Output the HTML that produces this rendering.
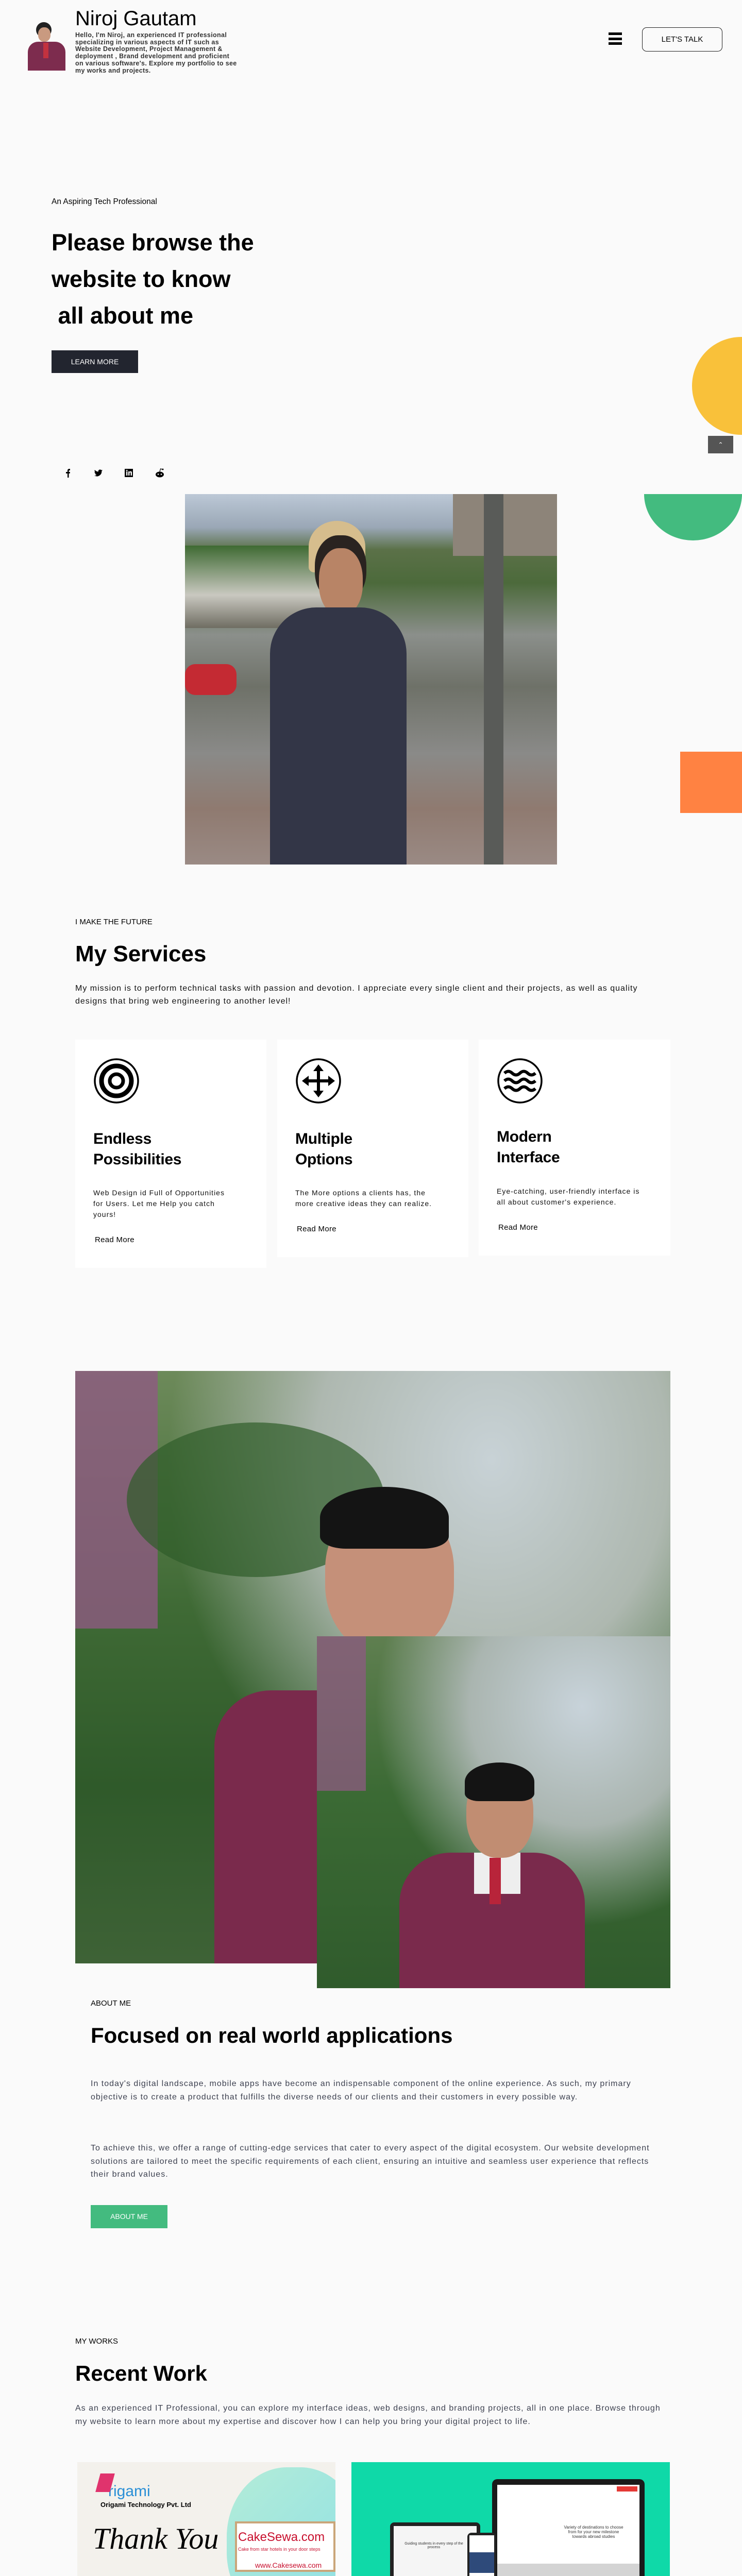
<!DOCTYPE html>
<html><head><meta charset="utf-8">
<style>
*{margin:0;padding:0;box-sizing:border-box}
html,body{width:1440px;height:5050px;background:#fafafa;overflow:hidden}
body{position:relative;font-family:"Liberation Sans",Arial,sans-serif;color:#000}
.a{position:absolute}
.h{font-weight:700;color:#000}
.svc{background:#fff}
.svc h3{font-size:30px;font-weight:700;line-height:40px;letter-spacing:-0.3px}
.svc p{font-size:14px;line-height:21px;color:#111;white-space:nowrap;letter-spacing:1px}
.svc .rm{font-size:15px;letter-spacing:.3px}
.p{font-size:16px;line-height:25.5px;color:#3d4150;white-space:nowrap;letter-spacing:1px}
</style></head><body>

<!-- header -->
<div class="a" style="left:54px;top:43px;width:73px;height:94px;overflow:hidden">
 <div class="a" style="left:16px;top:0;width:30px;height:30px;border-radius:50%;background:#222"></div>
 <div class="a" style="left:20px;top:10px;width:24px;height:28px;border-radius:45%;background:#c99a80"></div>
 <div class="a" style="left:0;top:38px;width:73px;height:60px;border-radius:20px 20px 0 0;background:#7d2c4e"></div>
 <div class="a" style="left:30px;top:40px;width:10px;height:30px;background:#c3323f"></div>
</div>
<div class="a" style="left:146px;top:12px;font-size:40px;line-height:48px;color:#000">Niroj Gautam</div>
<div class="a" style="left:146px;top:62px;font-size:12.5px;line-height:13.7px;font-weight:700;color:#333;white-space:nowrap;letter-spacing:.35px">Hello, I'm Niroj, an experienced IT professional<br>specializing in various aspects of IT such as<br>Website Development, Project Management &amp;<br>deployment , Brand development and proficient<br>on various software's. Explore my portfolio to see<br>my works and projects.</div>
<div class="a" style="left:1181px;top:63px;width:26px;height:5px;background:#000"></div>
<div class="a" style="left:1181px;top:73px;width:26px;height:5px;background:#000"></div>
<div class="a" style="left:1181px;top:82px;width:26px;height:5px;background:#000"></div>
<div class="a" style="left:1246px;top:53px;width:156px;height:47px;border:1px solid #222;border-radius:9px;font-size:15px;line-height:45px;text-align:center">LET'S TALK</div>

<!-- hero -->
<div class="a" style="left:100px;top:383px;font-size:15.5px">An Aspiring Tech Professional</div>
<div class="a h" style="left:100px;top:435px;font-size:45px;line-height:71px">Please browse the<br>website to know<br>&nbsp;all about me</div>
<div class="a" style="left:100px;top:680px;width:168px;height:44px;background:#22252f;color:#fff;font-size:14px;line-height:44px;text-align:center">LEARN MORE</div>

<div class="a" style="left:1343px;top:654px;width:190px;height:190px;border-radius:50%;background:#f9c13a"></div>
<div class="a" style="left:1374px;top:846px;width:49px;height:34px;background:#555;color:#fff;font-size:12px;line-height:34px;text-align:center">&#x2303;</div>
<div class="a" style="left:1250px;top:869px;width:190px;height:180px;border-radius:50%;background:#43bb7f;clip-path:inset(90px 0 0 0)"></div>
<div class="a" style="left:1320px;top:1459px;width:120px;height:119px;background:#ff8242"></div>

<!-- social -->
<svg class="a" style="left:120px;top:907px" width="210" height="22" viewBox="0 0 210 22">
 <path d="M11 20V12H8V9h3V6.5C11 4 12.5 3 14.5 3H16v3h-1.3c-.9 0-1.2.5-1.2 1.2V9H16l-.5 3h-2v8z" fill="#000"/>
 <path d="M79 6c-.6.3-1.2.4-1.9.5.7-.4 1.2-1 1.4-1.8-.6.4-1.4.6-2.1.8A3.3 3.3 0 0 0 70.8 8.5 9.3 9.3 0 0 1 64 5.1a3.3 3.3 0 0 0 1 4.4c-.5 0-1-.2-1.5-.4 0 1.6 1.1 2.9 2.6 3.2-.5.1-1 .2-1.500.1.4 1.3 1.6 2.3 3.1 2.3A6.6 6.6 0 0 1 63 16a9.3 9.3 0 0 0 14.3-8.3c.7-.5 1.2-1 1.7-1.7z" fill="#000"/>
 <rect x="122" y="3" width="16" height="16" fill="#000"/><rect x="125" y="8" width="2.4" height="8" fill="#fff"/><rect x="125" y="5" width="2.4" height="2.2" fill="#fff"/><path d="M129 8h2.3v1.2c.5-.9 1.4-1.4 2.4-1.4 1.8 0 2.3 1.1 2.3 3V16h-2.4v-4.6c0-.9-.2-1.5-1-1.5s-1.2.6-1.2 1.5V16H129z" fill="#fff"/>
 <ellipse cx="190" cy="14" rx="8" ry="5.5" fill="#000"/><circle cx="187" cy="13.5" r="1.3" fill="#fff"/><circle cx="193" cy="13.5" r="1.3" fill="#fff"/><path d="M190 8.5L191.5 3l4 1" stroke="#000" fill="none" stroke-width="1.2"/><circle cx="196" cy="4" r="1.5" fill="#000"/>
</svg>

<!-- photo 1 -->
<div class="a" style="left:359px;top:959px;width:722px;height:719px;overflow:hidden;background:linear-gradient(180deg,#bcc8d6 0%,#9aa7b6 9%,#5b7148 15%,#4c6a3b 24%,#8b8f8b 38%,#6e7168 52%,#8a8a88 70%,#8f7a70 85%,#9a8a84 100%)">
 <div class="a" style="left:0;top:100px;width:300px;height:160px;background:linear-gradient(180deg,#3e6a32,#c9c8c0 60%,#6f6d62)"></div>
 <div class="a" style="left:0;top:330px;width:100px;height:60px;border-radius:20px;background:#c42a33"></div>
 <div class="a" style="left:520px;top:0;width:202px;height:120px;background:#8d8479"></div>
 <div class="a" style="left:580px;top:0;width:38px;height:719px;background:#595b58"></div>
 <div class="a" style="left:240px;top:52px;width:110px;height:100px;border-radius:50% 50% 10% 10%;background:#d6bd8d"></div>
 <div class="a" style="left:252px;top:80px;width:100px;height:130px;border-radius:45%;background:#2a2320"></div>
 <div class="a" style="left:260px;top:105px;width:85px;height:130px;border-radius:45%;background:#b88466"></div>
 <div class="a" style="left:165px;top:220px;width:265px;height:499px;border-radius:90px 90px 0 0;background:#333647"></div>
</div>

<!-- services -->
<div class="a" style="left:146px;top:1781px;font-size:15px">I MAKE THE FUTURE</div>
<div class="a h" style="left:146px;top:1826px;font-size:44px;line-height:52px">My Services</div>
<div class="a" style="left:146px;top:1906px;font-size:16px;line-height:25px;color:#111;white-space:nowrap;letter-spacing:1px">My mission is to perform technical tasks with passion and devotion. I appreciate every single client and their projects, as well as quality<br>designs that bring web engineering to another level!</div>

<div class="a svc" style="left:146px;top:2018px;width:371px;height:443px">
 <svg class="a" style="left:35px;top:35px" width="90" height="90" viewBox="0 0 90 90"><circle cx="45" cy="45" r="42" fill="none" stroke="#000" stroke-width="3.5"/><circle cx="45" cy="45" r="29" fill="none" stroke="#000" stroke-width="9"/><circle cx="45" cy="45" r="13" fill="none" stroke="#000" stroke-width="7"/></svg>
 <h3 class="a" style="left:35px;top:173px">Endless<br>Possibilities</h3>
 <p class="a" style="left:35px;top:287px">Web Design id Full of Opportunities<br>for Users. Let me Help you catch<br>yours!</p>
 <div class="a rm" style="left:38px;top:380px">Read More</div>
</div>
<div class="a svc" style="left:538px;top:2018px;width:371px;height:422px">
 <svg class="a" style="left:35px;top:35px" width="90" height="90" viewBox="0 0 90 90"><circle cx="45" cy="45" r="42" fill="none" stroke="#000" stroke-width="3.5"/><path d="M45 13l-10 13h7v16H26v-7L13 45l13 10v-7h16v16h-7l10 13 10-13h-7V48h16v7l13-10-13-10v7H48V26h7z" fill="#000"/></svg>
 <h3 class="a" style="left:35px;top:173px">Multiple<br>Options</h3>
 <p class="a" style="left:35px;top:287px">The More options a clients has, the<br>more creative ideas they can realize.</p>
 <div class="a rm" style="left:38px;top:359px">Read More</div>
</div>
<div class="a svc" style="left:929px;top:2018px;width:372px;height:419px">
 <svg class="a" style="left:35px;top:35px" width="90" height="90" viewBox="0 0 90 90"><circle cx="45" cy="45" r="42" fill="none" stroke="#000" stroke-width="3.5"/><g fill="none" stroke="#000" stroke-width="6"><path d="M15 30q7.5-7 15 0t15 0 15 0 15 0"/><path d="M15 45q7.5-7 15 0t15 0 15 0 15 0"/><path d="M15 60q7.5-7 15 0t15 0 15 0 15 0"/></g></svg>
 <h3 class="a" style="left:35px;top:169px">Modern<br>Interface</h3>
 <p class="a" style="left:35px;top:284px">Eye-catching, user-friendly interface is<br>all about customer's experience.</p>
 <div class="a rm" style="left:38px;top:356px">Read More</div>
</div>

<!-- about photos -->
<div class="a" style="left:146px;top:2661px;width:1155px;height:1150px;overflow:hidden;background:radial-gradient(ellipse at 70% 15%,#c8d2d6 0%,#aeb8b0 30%,transparent 55%),linear-gradient(180deg,#6d8a5a 0%,#3f6a35 40%,#2f5a2a 70%,#3e6236 100%)">
 <div class="a" style="left:0;top:0;width:160px;height:500px;background:#8e5a82;opacity:.8"></div>
 <div class="a" style="left:100px;top:100px;width:500px;height:300px;border-radius:50%;background:#2f5d2a;opacity:.7"></div>
 <div class="a" style="left:270px;top:620px;width:230px;height:600px;border-radius:110px 0 0 0;background:#7a2a4c"></div>
 <div class="a" style="left:485px;top:250px;width:250px;height:300px;border-radius:45%;background:#c59079"></div>
 <div class="a" style="left:475px;top:225px;width:250px;height:120px;border-radius:50% 50% 20% 20%;background:#141414"></div>
</div>
<div class="a" style="left:615px;top:3176px;width:686px;height:683px;overflow:hidden;background:radial-gradient(ellipse at 75% 20%,#c8d3da 0%,#aab5b0 30%,transparent 55%),linear-gradient(180deg,#5f7f50 0%,#3b6a34 45%,#305b2c 100%)">
 <div class="a" style="left:0;top:0;width:95px;height:300px;background:#8e5a82;opacity:.75"></div>
 <div class="a" style="left:160px;top:420px;width:360px;height:300px;border-radius:100px 100px 0 0;background:#7a2a4c"></div>
 <div class="a" style="left:305px;top:420px;width:90px;height:80px;background:#eee"></div>
 <div class="a" style="left:335px;top:430px;width:22px;height:90px;background:#b8243a"></div>
 <div class="a" style="left:290px;top:260px;width:130px;height:170px;border-radius:45%;background:#c18d72"></div>
 <div class="a" style="left:287px;top:245px;width:135px;height:75px;border-radius:50% 50% 20% 20%;background:#141414"></div>
</div>

<div class="a" style="left:176px;top:3880px;font-size:15px">ABOUT ME</div>
<div class="a h" style="left:176px;top:3926px;font-size:42px;line-height:50px">Focused on real world applications</div>
<div class="a p" style="left:176px;top:4032px">In today's digital landscape, mobile apps have become an indispensable component of the online experience. As such, my primary<br>objective is to create a product that fulfills the diverse needs of our clients and their customers in every possible way.</div>
<div class="a p" style="left:176px;top:4157px">To achieve this, we offer a range of cutting-edge services that cater to every aspect of the digital ecosystem. Our website development<br>solutions are tailored to meet the specific requirements of each client, ensuring an intuitive and seamless user experience that reflects<br>their brand values.</div>
<div class="a" style="left:176px;top:4280px;width:149px;height:45px;background:#43bb7f;color:#fff;font-size:14px;line-height:45px;text-align:center">ABOUT ME</div>

<!-- works -->
<div class="a" style="left:146px;top:4536px;font-size:15px">MY WORKS</div>
<div class="a h" style="left:146px;top:4582px;font-size:42px;line-height:50px">Recent Work</div>
<div class="a p" style="left:146px;top:4662px">As an experienced IT Professional, you can explore my interface ideas, web designs, and branding projects, all in one place. Browse through<br>my website to learn more about my expertise and discover how I can help you bring your digital project to life.</div>

<div class="a" style="left:150px;top:4779px;width:501px;height:271px;overflow:hidden;background:#f3f1ec">
 <div class="a" style="left:290px;top:10px;width:260px;height:300px;border-radius:45%;background:linear-gradient(135deg,#b4ecd8,#8adfe6)"></div>
 <div class="a" style="left:60px;top:40px;font-size:30px;color:#2a8fd6">rigami</div>
 <div class="a" style="left:40px;top:22px;width:28px;height:36px;background:#e0336d;transform:skewX(-15deg)"></div>
 <div class="a" style="left:45px;top:75px;font-size:13px;font-weight:700">Origami Technology Pvt. Ltd</div>
 <div class="a" style="left:30px;top:115px;font-family:'Liberation Serif',serif;font-style:italic;font-size:58px">Thank You</div>
 <div class="a" style="left:306px;top:115px;width:195px;height:98px;background:#fff;border:4px solid #caa67a"></div>
 <div class="a" style="left:312px;top:132px;font-size:24px;color:#c8102e">CakeSewa.com</div>
 <div class="a" style="left:312px;top:164px;font-size:9px;color:#c8102e">Cake from star hotels in your door steps</div>
 <div class="a" style="left:345px;top:192px;font-size:14px;color:#c8102e">www.Cakesewa.com</div>
 <div class="a" style="left:25px;top:246px;width:250px;height:25px;border-radius:18px 18px 0 0;background:#a60c12;color:#fff;font-size:18px;padding:4px 8px;overflow:hidden;white-space:nowrap">Pleased to be Your dedicated</div>
</div>
<div class="a" style="left:682px;top:4779px;width:618px;height:271px;overflow:hidden;background:#0fd9a8">
 <div class="a" style="left:273px;top:33px;width:296px;height:220px;border-radius:10px;background:#1a1a1a"></div>
 <div class="a" style="left:283px;top:44px;width:276px;height:153px;background:#fff"></div>
 <div class="a" style="left:283px;top:197px;width:276px;height:56px;background:#d4d4d4"></div>
 <div class="a" style="left:410px;top:122px;width:120px;font-size:8px;text-align:center;color:#333">Variety of destinations to choose from for your new milestone towards abroad studies</div>
 <div class="a" style="left:515px;top:47px;width:40px;height:10px;background:#e53935"></div>
 <div class="a" style="left:75px;top:117px;width:175px;height:154px;border-radius:8px;background:#222"></div>
 <div class="a" style="left:82px;top:124px;width:161px;height:147px;background:#f5f5f5"></div>
 <div class="a" style="left:95px;top:155px;width:130px;font-size:7px;text-align:center;color:#333">Guiding students in every step of the process</div>
 <div class="a" style="left:225px;top:137px;width:56px;height:134px;border-radius:8px;background:#222"></div>
 <div class="a" style="left:229px;top:142px;width:48px;height:129px;background:#fff"></div>
 <div class="a" style="left:229px;top:175px;width:48px;height:40px;background:#2e4a7a"></div>
</div>
</body></html>
